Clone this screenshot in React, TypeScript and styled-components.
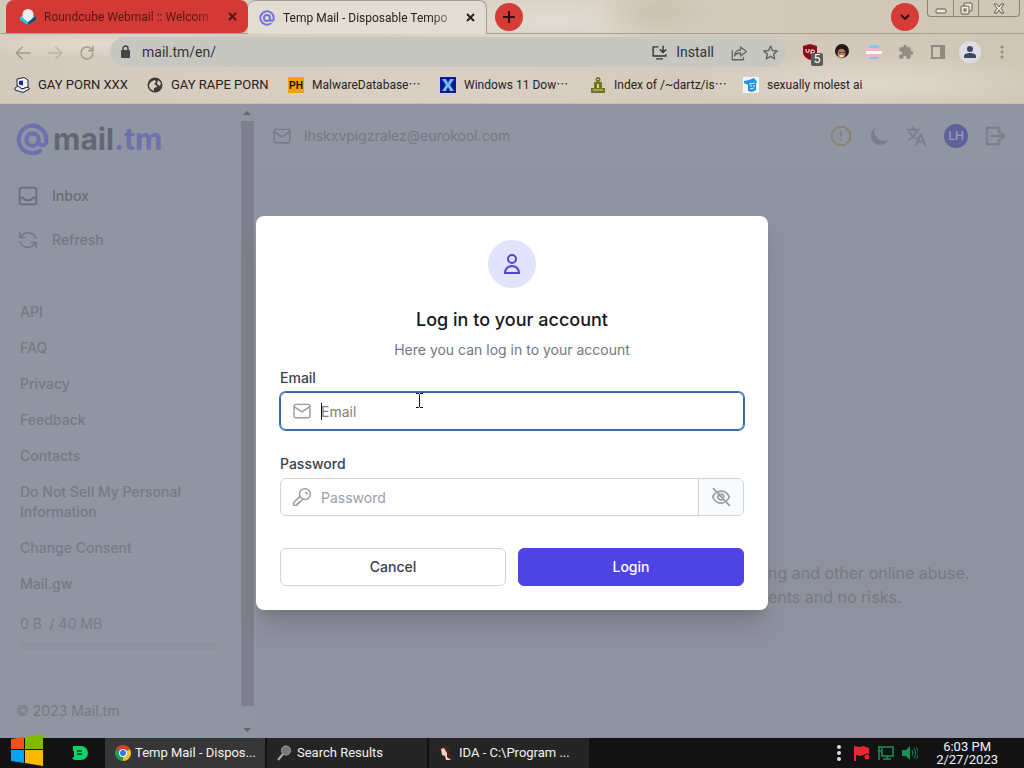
import React from 'react';
import styled, { createGlobalStyle } from 'styled-components';

const Global = createGlobalStyle`
  * { box-sizing: border-box; }
  body { margin: 0; font-family: Inter, "Liberation Sans", sans-serif; font-size: 14px; line-height: 20px; }
  button, input { font: inherit; margin: 0; }
  button { padding: 0; border: 0; background: none; color: inherit; }
  a { color: inherit; text-decoration: none; }
  svg { display: block; flex: none; }
  h1, h2, p, ul { margin: 0; padding: 0; }
`;

const Desktop = styled.div`
  min-height: 100vh;
  display: flex;
  flex-direction: column;
`;

/* ---------- browser chrome ---------- */
const Chrome = styled.header`
  flex: none;
  display: flex;
  flex-direction: column;
  font-family: Roboto, "Liberation Sans", sans-serif;
  font-size: 14px;
  color: #28221d;
  background:
    radial-gradient(ellipse 60px 30px at 64% 14%, rgba(190, 176, 156, 0.5), transparent),
    radial-gradient(ellipse 200px 30px at 85% 80%, rgba(226, 220, 210, 0.8), transparent),
    radial-gradient(ellipse 160px 34px at 54% 20%, rgba(228, 223, 214, 0.8), transparent),
    radial-gradient(ellipse 160px 14px at 10% 42%, rgba(228, 223, 212, 0.8), transparent),
    linear-gradient(90deg, #d4cabc, #d9d0c3 45%, #d4cabc 70%, #d0c6b6);
`;
const TabStrip = styled.div`
  display: flex;
  height: 34px;
  padding-left: 6px;
  border-bottom: 1px solid #a89e90;
`;
const Tab = styled.div<{ $active?: boolean }>`
  flex: 0 1 ${p => (p.$active ? 239 : 242)}px;
  min-width: 0;
  height: ${p => (p.$active ? 34 : 33)}px;
  display: flex;
  align-items: center;
  gap: 8px;
  padding: 0 10px 0 ${p => (p.$active ? 11 : 14)}px;
  font-size: 12px;
  border-radius: 8px 8px 0 0;
  background: ${p => (p.$active ? '#e2ddd3' : '#d43a35')};
  color: ${p => (p.$active ? '#28221d' : '#551713')};
  ${p => p.$active ? 'border-top: 1px solid #a89e90; border-right: 1px solid #a89e90;' : 'border-bottom-right-radius: 8px;'}
`;
const TabTitle = styled.span`
  flex: 1;
  min-width: 0;
  white-space: nowrap;
  mask-image: linear-gradient(90deg, #000 85%, rgba(0, 0, 0, 0.2));
`;
const TabClose = styled.button`
  width: 12px;
  height: 16px;
  display: grid;
  place-items: center;
`;
const RoundButton = styled.button`
  flex: none;
  width: 28px;
  height: 28px;
  margin: 3px 8px 0;
  border-radius: 50%;
  background: #d53b37;
  color: #30100d;
  display: grid;
  place-items: center;
`;
const Spacer = styled.div` flex: 1; `;
const WindowButtons = styled.div`
  display: flex;
  height: 17px;
  margin-right: 4px;
  border: 1px solid #8d8375;
  border-top: 0;
  border-radius: 0 0 4px 4px;
  color: #625b51;
`;
const WindowButton = styled.button<{ $w: number }>`
  width: ${p => p.$w}px;
  display: grid;
  place-items: center;
  & + & { border-left: 1px solid #8d8375; }
`;
const Toolbar = styled.div`
  height: 36px;
  display: flex;
  align-items: center;
  padding: 0 14px;
  color: #a29a8e;
`;
const NavButtons = styled.div`
  display: flex;
  gap: 16px;
  margin-right: 16px;
`;
const AddressBar = styled.div`
  flex: 1;
  height: 30px;
  border-radius: 15px;
  background: #c6c7c1;
  color: #66645f;
  display: flex;
  align-items: center;
  padding: 0 8px;
  gap: 16px;
`;
const Address = styled.input`
  flex: 1;
  min-width: 0;
  border: 0;
  outline: 0;
  padding: 0;
  background: none;
  color: #35332f;
  margin-left: -6px;
`;
const Install = styled.button`
  display: flex;
  align-items: center;
  gap: 8px;
  color: #35332f;
`;
const Extensions = styled.div`
  display: flex;
  align-items: center;
  gap: 16px;
  margin-left: 16px;
`;
const ExtButton = styled.button`
  position: relative;
  width: 16px;
  height: 16px;
  display: grid;
  place-items: center;
`;
const Count = styled.span`
  position: absolute;
  left: 9px;
  top: 9px;
  width: 12px;
  height: 13px;
  border-radius: 2px;
  background: #5c5b5c;
  color: #fff;
  font-size: 12px;
  line-height: 13px;
`;
const Profile = styled(ExtButton)`
  width: 22px;
  height: 22px;
  margin: 0 -3px;
  border-radius: 50%;
  background: #dcdce2;
`;
const Bookmarks = styled.nav`
  height: 34px;
  display: flex;
  align-items: center;
  padding: 0 14px 4px;
  gap: 16px;
  border-bottom: 1px solid #cbbfa9;
`;
const Bookmark = styled.a<{ $width: number }>`
  flex: none;
  width: ${p => p.$width}px;
  display: flex;
  align-items: center;
  gap: 8px;
  font-size: ${p => (p.$width > 126 ? 12 : 13)}px;
  white-space: nowrap;
`;
const Dots = styled.span` font-family: "Noto Sans CJK JP", sans-serif; line-height: 16px; `;

/* ---------- mail page ---------- */
const Page = styled.div`
  flex: 1;
  position: relative;
  display: flex;
  background: #8e919e;
  color: #747986;
  font-weight: 500;
`;
const Sidebar = styled.aside`
  flex: none;
  width: 240px;
  display: flex;
  flex-direction: column;
  background: #9096a1;
`;
const Logo = styled.a`
  display: flex;
  align-items: center;
  gap: 4px;
  height: 36px;
  margin: 17px 16px 0;
  font-size: 30px;
  font-weight: 700;
  color: #606876;
`;
const LogoAccent = styled.span` color: #6e70b0; `;
const MenuList = styled.div`
  display: flex;
  flex-direction: column;
  gap: 24px;
  margin: 29px 18px 52px;
`;
const MenuButton = styled.button<{ $current?: boolean }>`
  display: flex;
  align-items: center;
  gap: 14px;
  height: 20px;
  color: ${p => (p.$current ? '#666c7a' : '#727785')};
`;
const LinkList = styled.nav`
  display: flex;
  flex-direction: column;
  gap: 16px;
  padding: 0 40px 0 20px;
`;
const Quota = styled.div`
  margin: 20px 24px 0 20px;
  white-space: pre;
  color: #7a7e8b;
`;
const Meter = styled.div`
  height: 8px;
  margin-top: 8px;
  border-radius: 4px;
  background: #8c919d;
`;
const Copyright = styled.div`
  margin: auto 16px 17px;
  font-weight: 400;
`;
const ScrollTrack = styled.div`
  flex: none;
  width: 16px;
  background: #9096a1;
  display: flex;
  flex-direction: column;
  align-items: center;
  padding: 7px 2px 6px 0;
  gap: 6px;
  color: #606570;
`;
const ScrollThumb = styled.div`
  flex: 1;
  width: 13px;
  margin-bottom: 16px;
  background: #7e818d;
`;
const Main = styled.main`
  flex: 1;
  min-width: 0;
  display: flex;
  flex-direction: column;
`;
const TopBar = styled.div`
  height: 64px;
  display: flex;
  align-items: center;
  padding: 0 18px 0 16px;
  background: #9096a1;
`;
const Account = styled.button`
  display: flex;
  align-items: center;
  gap: 12px;
  font-weight: 400;
`;
const TopActions = styled.div`
  display: flex;
  align-items: center;
  gap: 16px;
  margin-left: auto;
  color: #787d8a;
`;
const Avatar = styled.button`
  width: 24px;
  height: 24px;
  border-radius: 50%;
  background: #5d639a;
  color: #989fba;
  font-size: 12px;
  line-height: 24px;
`;
const Blurb = styled.p`
  margin: auto 0 129px 512px;
  font-size: 16px;
  line-height: 24px;
  font-weight: 400;
  white-space: nowrap;
  color: #767984;
`;

/* ---------- login dialog ---------- */
const Backdrop = styled.div`
  position: absolute;
  inset: 0;
  display: flex;
  align-items: center;
  justify-content: center;
  padding-bottom: 16px;
`;
const Dialog = styled.form`
  width: 100%;
  max-width: 512px;
  padding: 24px;
  display: flex;
  flex-direction: column;
  border-radius: 8px;
  background: #fff;
  color: #374151;
  box-shadow: 0 20px 25px -5px rgba(0, 0, 0, 0.12), 0 8px 10px -6px rgba(0, 0, 0, 0.12);
`;
const Badge = styled.div`
  width: 48px;
  height: 48px;
  margin: 0 auto 20px;
  border-radius: 50%;
  background: #e0e4fd;
  color: #4f46d5;
  display: grid;
  place-items: center;
`;
const Title = styled.h2`
  font-size: 18px;
  line-height: 24px;
  font-weight: 500;
  text-align: center;
  color: #15181f;
`;
const Subtitle = styled.p`
  margin: 8px 0;
  text-align: center;
  font-weight: 400;
  color: #74777e;
`;
const Label = styled.label<{ $spaced?: boolean }>`
  margin: ${p => (p.$spaced ? 24 : 0)}px 0 4px;
`;
const Field = styled.div<{ $focus?: boolean }>`
  position: relative;
  height: 38px;
  display: flex;
  align-items: center;
  border: 1px solid ${p => (p.$focus ? '#2d68ad' : '#cfd2d6')};
  ${p => p.$focus && 'box-shadow: 0 0 0 1px #3b72b5;'}
  border-radius: 6px;
  padding-left: 11px;
  gap: 9px;
  color: #969aa2;
`;
const Input = styled.input<{ $dark?: boolean }>`
  flex: 1;
  min-width: 0;
  height: 34px;
  padding: 0;
  border: 0;
  outline: 0;
  background: none;
  font-weight: 400;
  color: #374151;
  &::placeholder { color: ${p => (p.$dark ? '#7d8085' : '#9a9ea5')}; opacity: 1; }
`;
const Caret = styled.span`
  position: absolute;
  left: 40px;
  top: 10px;
  width: 1px;
  height: 17px;
  background: #111;
`;
const Pointer = styled.svg`
  position: absolute;
  left: 135px;
  top: 0;
  color: #111;
`;
const Reveal = styled.button`
  width: 45px;
  height: 36px;
  border-left: 1px solid #cfd2d6;
  border-radius: 0 5px 5px 0;
  background: #f9fafb;
  display: grid;
  place-items: center;
`;
const Actions = styled.div`
  display: grid;
  grid-template-columns: 1fr 1fr;
  gap: 12px;
  margin-top: 32px;
`;
const ActionButton = styled.button<{ $primary?: boolean }>`
  height: 38px;
  border-radius: 6px;
  border: 1px solid ${p => (p.$primary ? '#4f43e2' : '#d1d3d7')};
  background: ${p => (p.$primary ? '#4f43e4' : '#fff')};
  color: ${p => (p.$primary ? '#fff' : '#374151')};
  font-weight: 500;
`;

/* ---------- task bar ---------- */
const Taskbar = styled.footer`
  flex: none;
  height: 30px;
  display: flex;
  align-items: center;
  background: #121212;
  color: #f2f2f2;
  font-family: Roboto, "Liberation Sans", sans-serif;
`;
const StartButton = styled.button`
  position: relative;
  margin: -6px 29px 0 10px;
`;
const PinButton = styled.button` margin-right: 17px; `;
const Tasks = styled.div`
  display: flex;
  gap: 2px;
`;
const Task = styled.button<{ $active?: boolean }>`
  width: 160px;
  height: 30px;
  display: flex;
  align-items: center;
  gap: 4px;
  padding: 0 10px;
  font-size: 13px;
  white-space: nowrap;
  background: ${p => (p.$active ? '#363636' : '#252525')};
`;
const Tray = styled.div`
  margin-left: auto;
  display: flex;
  align-items: center;
  gap: 8px;
  padding-right: 26px;
`;
const Overflow = styled.button` margin-right: 4px; `;
const Clock = styled.time`
  margin-left: 10px;
  font-size: 13px;
  line-height: 13px;
  text-align: center;
`;

/* ---------- drawings ---------- */
type IconProps = { size?: number; w?: number; children: React.ReactNode; color?: string };
const Line = ({ size = 20, w = 2, color = 'currentColor', children }: IconProps) => (
  <svg width={size} height={size} viewBox="0 0 24 24" fill="none" stroke={color} strokeWidth={w} strokeLinecap="round" strokeLinejoin="round" aria-hidden="true">{children}</svg>
);
const AtSign = ({ size, color }: { size: number; color: string }) => (
  <Line size={size} w={3} color={color}><circle cx="12" cy="12" r="4.500" /><path d="M16.500 13.500a2.750 2.750 0 0 0 5.500 0V12A10 10 0 1 0 17.500 20.300" /></Line>
);
const Cross = () => (
  <svg width="9" height="9" viewBox="0 0 9 9" stroke="currentColor" strokeWidth="2"><path d="M1 1l7 7M8 1L1 8" /></svg>
);
const Mail = ({ size = 20 }: { size?: number }) => (
  <Line size={size} w={1.700}><rect x="2.500" y="4" width="19" height="16" rx="2" /><path d="M3 7l9 6 9-6" /></Line>
);
const Cube = () => (
  <svg width="16" height="16" viewBox="0 0 16 16"><path d="M0 8l8-3 8 3v3l-8 5-8-5z" fill="#37bde8" /><path d="M8 10l8-3v4l-8 5z" fill="#164f72" /><circle cx="8" cy="5.500" r="5.500" fill="#e9eef0" /><path d="M1 7l7 4 7-4-7 6z" fill="#fff" /></svg>
);
const ComputerIcon = () => (
  <svg width="16" height="16" viewBox="0 0 16 16"><path d="M3 2l7-1.500L14 3v7l-6 2-5-3z" fill="#f2f2f2" stroke="#222238" /><path d="M5 4l4-.5v5L5 7.500z" fill="#1c2199" /><path d="M1 11l3-2 4 3 6-2 1.500 2L9 15.500 1 13z" fill="#e6e6ec" stroke="#222238" /></svg>
);
const GlobeIcon = () => (
  <svg width="16" height="16" viewBox="0 0 16 16"><circle cx="8" cy="8" r="7.500" fill="#3c3b3b" /><path d="M2 8c1-3 3-4 6-5l1 2-2 2 2 1 1 2-3 1v3c-3-1-5-3-5-6zM11 3l3 3-1 3-3-2z" fill="#d8cebf" /></svg>
);
const PhIcon = () => (
  <svg width="16" height="16" viewBox="0 0 16 16"><rect width="16" height="16" fill="#f7a10c" /><text x="8" y="12" textAnchor="middle" fontFamily="Liberation Sans" fontSize="10" fontWeight="bold" fill="#191000">PH</text></svg>
);
const XIcon = () => (
  <svg width="16" height="16" viewBox="0 0 16 16"><rect width="16" height="16" fill="#0b1a9c" /><path d="M2 2h4l2 4 2-4h4l-4 6 4 6h-4l-2-4-2 4H2l4-6z" fill="#79b7f2" /></svg>
);
const StatueIcon = () => (
  <svg width="16" height="16" viewBox="0 0 16 16" fill="#74741c"><circle cx="8" cy="2.500" r="2.500" /><path d="M4 5h8v6h3v5H1v-5h3z" /><path d="M7 2h2v1H7zM7 7h2v4H7zM3 12.500h10v1H3z" fill="#d5c9a0" /></svg>
);
const CapIcon = () => (
  <svg width="16" height="16" viewBox="0 0 16 16"><rect width="16" height="16" fill="#f3f6f8" /><path d="M1 4l5-1 5-2 3 4-1 2v6l-4 2-4-1V8L1 6z" fill="#2490df" /><path d="M6 7l6-1M7 9h2M10 9h2M7 12l4-1" stroke="#e4f2fc" /></svg>
);
const WindowsLogo = () => (
  <svg width="33" height="32" viewBox="0 0 33 32"><path d="M1 5l13-2v12H1z" fill="#f2511b" /><path d="M15 3l18-3v15H15z" fill="#7fba00" /><path d="M1 16h13v13L1 27z" fill="#00a4ef" /><path d="M15 16h18v16l-18-3z" fill="#ffb902" /></svg>
);
const ChromeLogo = () => (
  <svg width="16" height="16" viewBox="0 0 16 16"><path d="M8 8L1.070 4A8 8 0 0 1 14.930 4z" fill="#e33b2e" /><path d="M8 8l6.930-4A8 8 0 0 1 8 16z" fill="#fcc31e" /><path d="M8 8v8A8 8 0 0 1 1.070 4z" fill="#1a9e51" /><circle cx="8" cy="8" r="4" fill="#fff" /><circle cx="8" cy="8" r="3" fill="#2f78e6" /></svg>
);

const bookmarks = [
  { icon: <ComputerIcon />, text: 'GAY PORN XXX', width: 117 },
  { icon: <GlobeIcon />, text: 'GAY RAPE PORN', width: 125 },
  { icon: <PhIcon />, text: 'MalwareDatabase', cut: true, width: 136 },
  { icon: <XIcon />, text: 'Windows 11 Dow', cut: true, width: 134 },
  { icon: <StatueIcon />, text: 'Index of /~dartz/is', cut: true, width: 137 },
  { icon: <CapIcon />, text: 'sexually molest ai', width: 130 },
];
const links = ['API', 'FAQ', 'Privacy', 'Feedback', 'Contacts', 'Do Not Sell My Personal Information', 'Change Consent', 'Mail.gw'];

export default function App() {
  return (
    <Desktop>
      <Global />
      <Chrome>
        <TabStrip>
          <Tab>
            <Cube />
            <TabTitle>Roundcube Webmail :: Welcom</TabTitle>
            <TabClose aria-label="Close tab"><Cross /></TabClose>
          </Tab>
          <Tab $active>
            <AtSign size={16} color="#7473df" />
            <TabTitle>Temp Mail - Disposable Tempo</TabTitle>
            <TabClose aria-label="Close tab"><Cross /></TabClose>
          </Tab>
          <RoundButton aria-label="New tab">
            <svg width="12" height="12" viewBox="0 0 12 12" stroke="currentColor" strokeWidth="2"><path d="M6 0v12M0 6h12" /></svg>
          </RoundButton>
          <Spacer />
          <RoundButton aria-label="Search tabs">
            <svg width="10" height="6" viewBox="0 0 10 6" fill="none" stroke="currentColor" strokeWidth="2"><path d="M1 1l4 4 4-4" /></svg>
          </RoundButton>
          <WindowButtons>
            <WindowButton $w={25} aria-label="Minimize">
              <svg width="12" height="14" viewBox="0 0 12 14"><rect x="1" y="8" width="10" height="4" rx="1" fill="#eee8dc" stroke="currentColor" /></svg>
            </WindowButton>
            <WindowButton $w={25} aria-label="Restore">
              <svg width="13" height="13" viewBox="0 0 13 13" fill="#eee8dc" stroke="currentColor"><rect x="4" y="1" width="8" height="8" rx="1" /><rect x="1" y="4" width="8" height="8" rx="1" /><rect x="4" y="7" width="2" height="2" /></svg>
            </WindowButton>
            <WindowButton $w={41} aria-label="Close">
              <svg width="12" height="11" viewBox="0 0 12 11"><path d="M1 1h3l2 3 2-3h3L8 5.500l3 4.500H8L6 7l-2 3H1l3-4.500z" fill="#eee8dc" stroke="currentColor" /></svg>
            </WindowButton>
          </WindowButtons>
        </TabStrip>
        <Toolbar>
          <NavButtons>
            <ExtButton aria-label="Back"><Line size={18}><path d="M21 12H3m8-8l-8 8 8 8" /></Line></ExtButton>
            <ExtButton aria-label="Forward"><Line size={18} color="#bdb3a5"><path d="M3 12h18m-8-8l8 8-8 8" /></Line></ExtButton>
            <ExtButton aria-label="Reload"><Line size={18}><path d="M20 12a8 8 0 1 1-2.300-5.700L20 8.500M20 3v6h-6" /></Line></ExtButton>
          </NavButtons>
          <AddressBar>
            <svg width="14" height="14" viewBox="0 0 14 14"><rect x="3" y="5" width="9" height="8" rx="1" fill="#454542" /><path d="M5 6V3.500a2.500 2.500 0 0 1 5 0V6" fill="none" stroke="#454542" strokeWidth="1.500" /></svg>
            <Address aria-label="Address" defaultValue="mail.tm/en/" />
            <Install>
              <Line size={17}><path d="M10 4H3v13h18v-2M8 21h8M17 3v9m-4-4l4 4 4-4" /></Line>
              Install
            </Install>
            <ExtButton aria-label="Share"><Line size={18} w={1.700}><path d="M3 9v12h15v-3M14 4l8 6-8 6v-4c-4 0-7 1-8 4 0-5 3-8 8-8z" /></Line></ExtButton>
            <ExtButton aria-label="Bookmark this page"><Line size={17}><path d="M12 3l2.700 6.200 6.800.6-5.100 4.500 1.500 6.700-5.900-3.500L6.100 21l1.500-6.700-5.100-4.500 6.800-.6z" /></Line></ExtButton>
          </AddressBar>
          <Extensions>
            <ExtButton aria-label="Blocker">
              <svg width="16" height="16" viewBox="0 0 16 16"><path d="M8 0l7 2v6c0 4-3 6-7 8-4-2-7-4-7-8V2z" fill="#8a0d16" /><path d="M4 5v2a1.500 1.500 0 0 0 3 0V5M9 10V6h2a1 1 0 0 1 0 3H9" fill="none" stroke="#fff" /></svg>
              <Count>5</Count>
            </ExtButton>
            <ExtButton aria-label="Portrait extension">
              <svg width="16" height="16" viewBox="0 0 16 16"><circle cx="8" cy="7" r="7" fill="#251713" /><ellipse cx="7.500" cy="9.500" rx="4" ry="5" fill="#b77c5d" /><path d="M3.500 7c2-3 6-3 8 0V4L8 2 4 4z" fill="#251713" /><path d="M5.500 12h4" stroke="#fff" strokeWidth="1.500" /><path d="M5 8.500h2M8.500 8.500h2" stroke="#3a211a" /></svg>
            </ExtButton>
            <ExtButton aria-label="Striped extension">
              <svg width="16" height="16" viewBox="0 0 16 16"><path d="M4 1h8l2 3H2zM2 12h12l-2 3H4z" fill="#7dc8ec" /><path d="M1 4h14v3H1zM1 10h14v3H1z" fill="#efb6c7" /><path d="M0 7h16v3H0z" fill="#f8f4f2" /></svg>
            </ExtButton>
            <ExtButton aria-label="Extensions">
              <svg width="16" height="16" viewBox="0 0 24 24" fill="#928b81"><path d="M20.500 11H19V7a2 2 0 0 0-2-2h-4V3.500a2.500 2.500 0 0 0-5 0V5H4a2 2 0 0 0-2 2v3.800h1.500a2.700 2.700 0 0 1 0 5.400H2V20a2 2 0 0 0 2 2h3.800v-1.500a2.700 2.700 0 0 1 5.400 0V22H17a2 2 0 0 0 2-2v-4h1.500a2.500 2.500 0 0 0 0-5z" /></svg>
            </ExtButton>
            <ExtButton aria-label="Side panel">
              <svg width="14" height="14" viewBox="0 0 14 14"><path d="M1 1h12v12H1z" fill="none" stroke="#928b81" strokeWidth="2" /><path d="M9 1h4v12H9z" fill="#928b81" /></svg>
            </ExtButton>
            <Profile aria-label="Profile">
              <svg width="12" height="12" viewBox="0 0 12 12" fill="#3f4666"><circle cx="6" cy="3" r="3" /><path d="M0 12V10c0-4 12-4 12 0v2z" /></svg>
            </Profile>
            <ExtButton aria-label="Menu">
              <svg width="4" height="14" viewBox="0 0 4 14" fill="#928b81"><circle cx="2" cy="2" r="1.500" /><circle cx="2" cy="7" r="1.500" /><circle cx="2" cy="12" r="1.500" /></svg>
            </ExtButton>
          </Extensions>
        </Toolbar>
        <Bookmarks aria-label="Bookmarks">
          {bookmarks.map(b => (
            <Bookmark href="#" key={b.text} $width={b.width}>{b.icon}<span>{b.text}{b.cut && <Dots lang="ja">…</Dots>}</span></Bookmark>
          ))}
        </Bookmarks>
      </Chrome>

      <Page>
        <Sidebar>
          <Logo href="#"><AtSign size={33} color="#6e70b0" /><span>mail<LogoAccent>.tm</LogoAccent></span></Logo>
          <MenuList>
            <MenuButton $current>
              <Line><rect x="2" y="2" width="20" height="20" rx="2" /><path d="M2 14h4l3 3h6l3-3h4" /></Line>
              Inbox
            </MenuButton>
            <MenuButton>
              <Line w={1.700}><path d="M2 3v6h6M22 21v-6h-6M3 9a10 10 0 0 1 18.500 1M21 15a10 10 0 0 1-18.500-1" /></Line>
              Refresh
            </MenuButton>
          </MenuList>
          <LinkList>
            {links.map(l => <a href="#" key={l}>{l}</a>)}
          </LinkList>
          <Quota>{'0 B  / 40 MB'}<Meter /></Quota>
          <Copyright>© 2023 Mail.tm</Copyright>
        </Sidebar>
        <ScrollTrack>
          <svg width="8" height="4" viewBox="0 0 8 4" fill="currentColor"><path d="M0 4l4-4 4 4z" /></svg>
          <ScrollThumb />
          <svg width="8" height="4" viewBox="0 0 8 4" fill="currentColor"><path d="M0 0l4 4 4-4z" /></svg>
        </ScrollTrack>
        <Main>
          <TopBar>
            <Account><Mail />lhskxvpigzralez@eurokool.com</Account>
            <TopActions>
              <Line size={22} color="#8c826f"><path d="M8 2h8l6 6v8l-6 6H8l-6-6V8zM12 7v5M12 16v.1" /></Line>
              <svg width="22" height="22" viewBox="0 0 24 24" fill="currentColor"><path d="M8 3A10 10 0 1 0 22 16A10 10 0 0 1 8 3z" /></svg>
              <Line size={22}><path d="M2 5h12M8 2v3M12 5c-1 5-5 9-9 11M4 8c2 4 5 6 8 7M11 22l5-12 5 12M13 18h6" /></Line>
              <Avatar>LH</Avatar>
              <Line size={22}><path d="M16 8V3H3v18h13v-5M8 12h14m-4-4l4 4-4 4" /></Line>
            </TopActions>
          </TopBar>
          <Blurb>ng and other online abuse.<br />ents and no risks.</Blurb>
        </Main>

        <Backdrop>
          <Dialog role="dialog" aria-labelledby="login-title" onSubmit={e => e.preventDefault()}>
            <Badge>
              <svg width="24" height="24" viewBox="0 0 24 24" fill="none" stroke="currentColor" strokeWidth="2"><circle cx="12" cy="7" r="4" /><path d="M5 21a7 7 0 0 1 14 0z" /></svg>
            </Badge>
            <Title id="login-title">Log in to your account</Title>
            <Subtitle>Here you can log in to your account</Subtitle>
            <Label htmlFor="email">Email</Label>
            <Field $focus>
              <Mail />
              <Input id="email" type="email" placeholder="Email" $dark />
              <Caret />
              <Pointer width="7" height="15" viewBox="0 0 7 15" fill="none" stroke="currentColor"><path d="M0 .5h3M4 .5h3M3.500 1v13M0 14.500h3M4 14.500h3" /></Pointer>
            </Field>
            <Label htmlFor="password" $spaced>Password</Label>
            <Field>
              <Line w={1.700}><circle cx="15.500" cy="8.500" r="6.500" /><path d="M9.500 11L2 18.500V22h4v-2h2v-2h2l3-3M16 6.500a2 2 0 0 1 2 2" /></Line>
              <Input id="password" type="password" placeholder="Password" />
              <Reveal type="button" aria-label="Show password">
                <Line><path d="M3 2l19 20M8 6c6-2.500 11 0 14 6-1 2-2 3.500-3.500 4.700M5 7.500C3.500 9 2.500 10.500 2 12c3 6 8 8.500 13.500 6.500M9.500 9.500a3.500 3.500 0 0 0 5 5M12 8.500a3.500 3.500 0 0 1 3.500 3.500" /></Line>
              </Reveal>
            </Field>
            <Actions>
              <ActionButton type="button">Cancel</ActionButton>
              <ActionButton $primary>Login</ActionButton>
            </Actions>
          </Dialog>
        </Backdrop>
      </Page>

      <Taskbar>
        <StartButton aria-label="Start"><WindowsLogo /></StartButton>
        <PinButton aria-label="Pinned app">
          <svg width="16" height="14" viewBox="0 0 16 14"><path d="M1 0h8a7 7 0 0 1 0 14H2L0 12l2-1V5H1z" fill="#08d46a" /><path d="M5 5h5M5 8h5" stroke="#0b3c24" strokeWidth="1.500" /></svg>
        </PinButton>
        <Tasks>
          <Task $active><ChromeLogo />Temp Mail - Dispos...</Task>
          <Task>
            <svg width="16" height="16" viewBox="0 0 16 16"><circle cx="9" cy="5.500" r="4.500" fill="#767876" stroke="#a2a4a2" /><path d="M6 9l-5 6" stroke="#aaa" strokeWidth="2" /></svg>
            Search Results
          </Task>
          <Task>
            <svg width="16" height="16" viewBox="0 0 16 16"><path d="M0 2c3-3 8-2 10 1l2 8 4 4H6L3 9z" fill="#44251c" /><path d="M2 4l3-1 3 5v4l4 3H7l-1-4-3-1z" fill="#ead0c0" /></svg>
            IDA - C:\Program ...
          </Task>
        </Tasks>
        <Tray>
          <Overflow aria-label="More tray icons">
            <svg width="6" height="18" viewBox="0 0 6 18" fill="#ddd"><circle cx="3" cy="3" r="2" /><circle cx="3" cy="9" r="2" /><circle cx="3" cy="15" r="2" /></svg>
          </Overflow>
          <svg width="16" height="16" viewBox="0 0 16 16"><path d="M0 1l6 1 3-1 6 2v8l-6-1-3 1-4-1v6H0z" fill="#ef2434" /><circle cx="13" cy="12" r="3" fill="#ef2434" stroke="#121212" /></svg>
          <svg width="16" height="16" viewBox="0 0 16 16" fill="none" stroke="#189158" strokeWidth="1.500"><path d="M4 2h11v9H4zM9 11v3M5 14h8M1 1v14M0 2h3M0 6h3" /></svg>
          <svg width="16" height="16" viewBox="0 0 16 16"><path d="M0 5h4l4-4v14l-4-4H0z" fill="#189158" /><path d="M10 5c1 2 1 4 0 6M12 3c2 3 2 7 0 10M14 2c3 4 3 8 0 12" fill="none" stroke="#189158" /></svg>
          <Clock>6:03 PM<br />2/27/2023</Clock>
        </Tray>
      </Taskbar>
    </Desktop>
  );
}
